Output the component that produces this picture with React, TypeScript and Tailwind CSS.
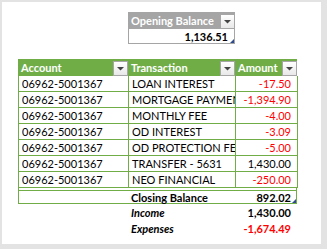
import React from 'react';

type Txn = { account: string; transaction: string; amount: string; negative: boolean };

const rows: Txn[] = [
  { account: '06962-5001367', transaction: 'LOAN INTEREST', amount: '-17.50', negative: true },
  { account: '06962-5001367', transaction: 'MORTGAGE PAYMENT', amount: '-1,394.90', negative: true },
  { account: '06962-5001367', transaction: 'MONTHLY FEE', amount: '-4.00', negative: true },
  { account: '06962-5001367', transaction: 'OD INTEREST', amount: '-3.09', negative: true },
  { account: '06962-5001367', transaction: 'OD PROTECTION FEE', amount: '-5.00', negative: true },
  { account: '06962-5001367', transaction: 'TRANSFER - 5631', amount: '1,430.00', negative: false },
  { account: '06962-5001367', transaction: 'NEO FINANCIAL', amount: '-250.00', negative: true },
];

// excel style filter dropdown button
const FilterButton: React.FC = () => (
  <div className="w-[15px] h-[15px] shrink-0 border border-[#a6a6a6] bg-gradient-to-b from-white to-[#e8e8e8] flex items-center justify-center">
    <svg width="7" height="4" viewBox="0 0 7 4">
      <polygon points="0,0 7,0 3.5,3.5" fill="#444" />
    </svg>
  </div>
);

const ResizeHandle: React.FC = () => (
  <svg className="absolute right-0 bottom-0" width="4" height="4" viewBox="0 0 4 4">
    <polygon points="4,0 4,4 0,4" fill="#2f4a8a" />
  </svg>
);

const App: React.FC = () => {
  return (
    <div className="w-[327px] h-[249px] bg-[#e3e3e3] pt-[2px] pl-[2px] pr-[6px] pb-[5px] font-['Lato','Liberation_Sans',sans-serif] text-[11px] text-black">
      <div className="h-full bg-white pt-[10px] pl-[16px]">
        {/* Opening balance */}
        <div className="ml-[110px] w-[107px]">
          <div className="h-[17px] bg-[#a5a5a5] flex items-end justify-between pl-[3px]">
            <span className="self-center font-bold text-white leading-none whitespace-nowrap">Opening Balance</span>
            <FilterButton />
          </div>
          <div className="relative h-[15px] border-x border-b border-[#a5a5a5] flex items-center justify-end pr-[6px] font-bold leading-none">
            1,136.51
            <ResizeHandle />
          </div>
        </div>

        {/* Transactions table */}
        <div className="mt-[15px] w-[279px]">
          <div className="h-[17px] bg-[#70ad47] grid grid-cols-[110px_107px_62px] text-white font-bold">
            <div className="flex items-end justify-between pl-[3px]">
              <span className="self-center leading-none">Account</span>
              <FilterButton />
            </div>
            <div className="flex items-end justify-between pl-[3px]">
              <span className="self-center leading-none">Transaction</span>
              <FilterButton />
            </div>
            <div className="flex items-end justify-between pl-[3px]">
              <span className="self-center leading-none">Amount</span>
              <FilterButton />
            </div>
          </div>

          {rows.map((r, i) => (
            <div key={i} className="h-[16px] grid grid-cols-[110px_107px_62px] border-l border-[#70ad47]">
              <div className="border-r border-b border-[#70ad47] pl-[3px] flex items-center overflow-hidden whitespace-nowrap leading-none">
                {r.account}
              </div>
              <div className="border-r border-b border-[#70ad47] pl-[3px] flex items-center overflow-hidden whitespace-nowrap leading-none">
                {r.transaction}
              </div>
              <div
                className={`border-r border-b border-[#70ad47] pr-[6px] flex items-center justify-end whitespace-nowrap leading-none ${
                  r.negative ? 'text-[#ff0000]' : 'text-black'
                }`}
              >
                {r.amount}
              </div>
            </div>
          ))}

          {/* Total row with double top line */}
          <div className="border-x border-b border-[#70ad47] pt-[2px]">
            <div className="relative h-[13px] border-t border-[#70ad47] grid grid-cols-[109px_107px_61px] font-bold">
              <div />
              <div className="pl-[3px] flex items-center leading-none">Closing Balance</div>
              <div className="pr-[5px] flex items-center justify-end leading-none">892.02</div>
              <ResizeHandle />
            </div>
          </div>

          <div className="h-[16px] grid grid-cols-[110px_107px_62px] font-bold">
            <div />
            <div className="pl-[3px] flex items-center italic leading-none">Income</div>
            <div className="pr-[6px] flex items-center justify-end leading-none">1,430.00</div>
          </div>
          <div className="h-[16px] grid grid-cols-[110px_107px_62px] font-bold">
            <div />
            <div className="pl-[3px] flex items-center italic leading-none">Expenses</div>
            <div className="pr-[6px] flex items-center justify-end leading-none text-[#ff0000]">-1,674.49</div>
          </div>
        </div>
      </div>
    </div>
  );
};

export default App;
